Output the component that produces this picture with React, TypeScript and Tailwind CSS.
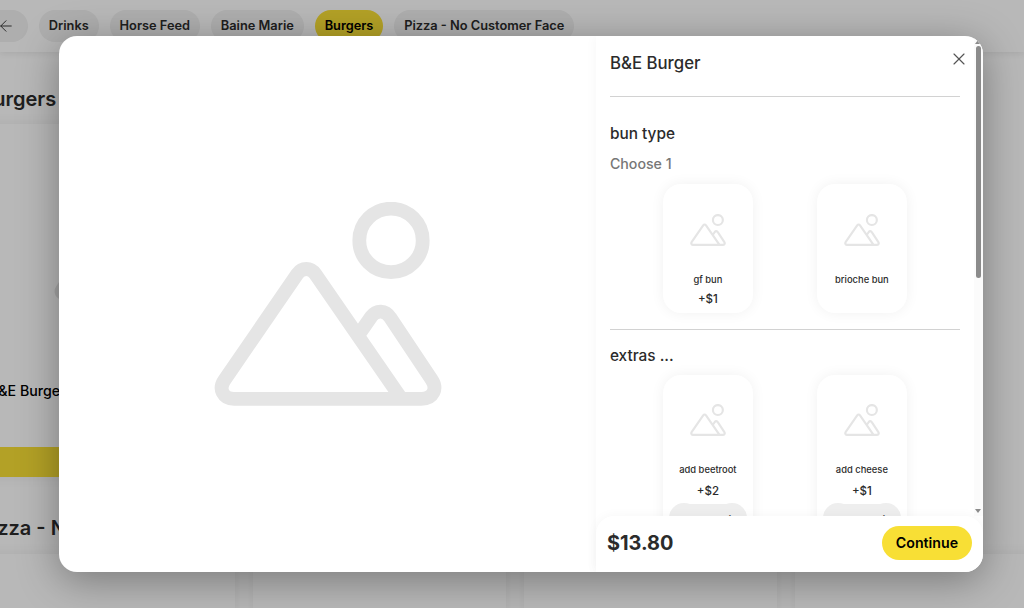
import { ArrowLeft, X } from "lucide-react";

const categories = ["Drinks", "Horse Feed", "Baine Marie", "Burgers", "Pizza - No Customer Face"];

const groups = [
  {
    name: "bun type",
    hint: "Choose 1",
    stepper: false,
    options: [
      { name: "gf bun", price: "+$1" },
      { name: "brioche bun", price: "" },
    ],
  },
  {
    name: "extras ...",
    hint: "",
    stepper: true,
    options: [
      { name: "add beetroot", price: "+$2" },
      { name: "add cheese", price: "+$1" },
    ],
  },
];

function PlaceholderIcon({ className }: { className: string }) {
  return (
    <svg
      viewBox="0 0 228 204"
      className={className}
      fill="none"
      stroke="currentColor"
      strokeWidth="13.8"
      strokeLinejoin="round"
    >
      <circle cx="177" cy="38.4" r="31.7" />
      <path d="M187.5 196.8L101.3 72C96.5 65.3 88 65.3 83.3 72L10.5 178C4.2 187 9 196.8 20 196.8H207.5C219 196.8 224 187 217.5 177.3L176.3 115.7C171.3 107.7 162.5 107.7 157.2 114.7L145 132.3" />
    </svg>
  );
}

function OptionCard({
  name,
  price,
  stepper,
}: {
  name: string;
  price: string;
  stepper: boolean;
}) {
  return (
    <div
      className={`flex w-[90px] shrink-0 flex-col items-center rounded-[18px] bg-white shadow-[0_0_14px_rgba(0,0,0,0.06)] ${
        stepper ? "h-[166px]" : "h-[129px]"
      }`}
    >
      <PlaceholderIcon className={`h-8 w-9 text-[#e5e5e5] ${stepper ? "mt-[29px]" : "mt-[30px]"}`} />
      <div className="mt-7 text-[9.4px] leading-3 font-medium">{name}</div>
      <div className={`text-[11.5px] leading-4 font-medium ${stepper ? "mt-[7px]" : "mt-[5px]"}`}>
        {price}
      </div>
      {stepper && (
        <div className="mt-1 flex h-[30px] w-[78px] items-center text-xs font-medium">
          <span className="flex h-[30px] w-[30px] items-center justify-center rounded-full bg-[#eeeeee] pt-1">
            −
          </span>
          <span className="-mx-[15px] flex h-7 flex-1 items-center justify-center bg-[#eeeeee] pt-[5px]">
            0
          </span>
          <span className="flex h-[30px] w-[30px] items-center justify-center rounded-full bg-[#eeeeee] pr-1 text-sm">
            +
          </span>
        </div>
      )}
    </div>
  );
}

function MenuPage() {
  return (
    <div className="h-full overflow-hidden">
      <header className="flex h-[52px] items-center gap-[10.8px] bg-white shadow-[0_2px_6px_rgba(0,0,0,0.08)]">
        <div className="-ml-5 flex h-8 w-12 items-center justify-center rounded-full bg-[#f1f1f1]">
          <ArrowLeft className="size-[18px] translate-x-0.5" strokeWidth={1.2} />
        </div>
        {categories.map((c) => (
          <div
            key={c}
            className={`flex h-8 items-center rounded-full px-[10px] text-[12.8px] font-semibold whitespace-nowrap ${
              c === "Burgers" ? "bg-[#f8df35] text-black" : "bg-[#f1f1f1]"
            }`}
          >
            {c}
          </div>
        ))}
      </header>

      <section>
        <h2 className="-ml-5 flex h-[72px] items-center pt-[22px] text-xl font-semibold">
          Burgers
        </h2>
        <div className="-ml-[18px] flex h-[353px] w-[253px] flex-col bg-white shadow-[0_0_12px_rgba(0,0,0,0.07)]">
          <div className="flex h-[257px] items-end justify-center pb-[81px]">
            <PlaceholderIcon className="h-[98px] w-[110px] text-[#e5e5e5]" />
          </div>
          <div className="pl-[7px] text-[14.2px] leading-5 font-medium text-black">B&E Burger</div>
          <div className="mt-auto h-[30px] bg-[#f8df35]" />
        </div>
      </section>

      <section>
        <h2 className="-ml-[21px] flex h-[77px] items-center pt-[25px] text-xl font-semibold">
          Pizza - No Customer Face
        </h2>
        <div className="-ml-[18px] flex gap-[18px]">
          {[0, 1, 2, 3].map((i) => (
            <div
              key={i}
              className="h-[350px] w-[253px] shrink-0 bg-white shadow-[0_0_12px_rgba(0,0,0,0.07)]"
            />
          ))}
        </div>
      </section>
    </div>
  );
}

export default function App() {
  return (
    <div className="relative h-[608px] w-[1024px] overflow-hidden bg-white font-['Inter',sans-serif] text-[#2b2b2b]">
      <MenuPage />

      {/* Backdrop */}
      <div className="absolute inset-0 flex items-center bg-black/28">
        {/* Product modal */}
        <div className="ml-[59.4px] flex h-[536px] w-[923.6px] overflow-hidden rounded-[18px] bg-white shadow-[0_8px_40px_rgba(0,0,0,0.35)]">
          <div className="flex w-[536.5px] items-center justify-center">
            <PlaceholderIcon className="h-[204px] w-[228px] text-[#e5e5e5]" />
          </div>

          <div className="flex flex-1 flex-col shadow-[0_0_12px_rgba(0,0,0,0.04)]">
            <div className="flex h-[480px] overflow-hidden">
              <div className="w-[364px] pl-[14px]">
                <div className="flex h-[61px] items-start justify-between border-b border-[#d2d2d2]">
                  <h1 className="mt-[13px] text-[16.8px] leading-7 font-medium">B&E Burger</h1>
                  <X className="mt-[13px] -mr-[9px] size-5 text-[#555555]" strokeWidth={1.4} />
                </div>
                {groups.map((g, i) => (
                  <div
                    key={g.name}
                    className={
                      i === 0
                        ? "h-[233px] border-b border-[#d2d2d2] pt-[25px]"
                        : "pt-[14px]"
                    }
                  >
                    <div className="text-[15.4px] leading-6 font-medium">{g.name}</div>
                    {g.hint && (
                      <div className="mt-2 text-[14.2px] leading-5 font-medium text-[#777777]">
                        {g.hint}
                      </div>
                    )}
                    <div
                      className={`ml-[53px] flex gap-16 ${g.stepper ? "mt-[7px]" : "mt-[10px]"}`}
                    >
                      {g.options.map((o) => (
                        <OptionCard key={o.name} {...o} stepper={g.stepper} />
                      ))}
                    </div>
                  </div>
                ))}
              </div>

              {/* Scrollbar */}
              <div className="ml-auto flex w-[9px] flex-col items-center bg-[#fbfbfb]">
                <svg viewBox="0 0 6 4" className="mt-1 h-1 w-1.5 fill-[#8b8b8b]">
                  <path d="M3 0L6 4H0z" />
                </svg>
                <div className="mt-0.5 h-[232px] w-[5px] rounded-full bg-[#8b8b8b]" />
                <svg viewBox="0 0 6 4" className="mt-auto mb-[3px] h-1 w-1.5 fill-[#8b8b8b]">
                  <path d="M0 0H6L3 4z" />
                </svg>
              </div>
            </div>

            <div className="z-10 flex h-14 items-center justify-between rounded-t-[18px] bg-white px-[11px] pb-0.5 shadow-[0_0_12px_rgba(0,0,0,0.04)]">
              <span className="pt-0.5 text-[19.9px] font-bold">$13.80</span>
              <button className="h-[34px] w-[90px] rounded-full bg-[#f8df35] text-[14.2px] font-semibold text-black">
                Continue
              </button>
            </div>
          </div>
        </div>
      </div>
    </div>
  );
}
